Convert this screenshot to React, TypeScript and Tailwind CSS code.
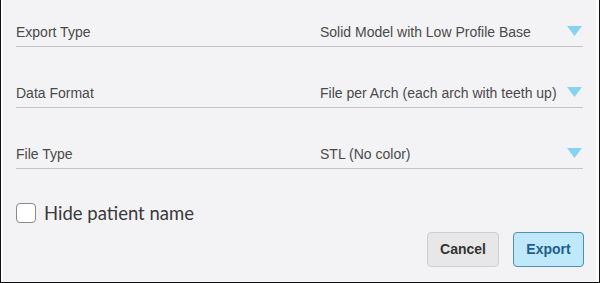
export default function App() {
  const rows = [
    { label: "Export Type", value: "Solid Model with Low Profile Base" },
    { label: "Data Format", value: "File per Arch (each arch with teeth up)" },
    { label: "File Type", value: "STL (No color)" },
  ];

  return (
    <div className="h-[283px] w-[600px] bg-[#f3f3f5] font-['Liberation_Sans',Arial,sans-serif]">
      <div className="flex h-full flex-col border-x border-b border-[#111] shadow-[inset_2px_0_0_#fbfbfc,inset_-3px_0_0_#fbfbfc]">
        <div className="flex flex-col gap-[14px] pl-[15px] pr-[16px]">
          {rows.map((row) => (
            <div
              key={row.label}
              className="flex h-[47px] items-end border-b border-[#c4c4c6] pb-[4px] text-[14px] leading-[20px] text-[#4a4a4a]"
            >
              <span className="w-[304px]">{row.label}</span>
              <span className="flex-1">{row.value}</span>
              <svg width="15" height="10" viewBox="0 0 15 10" className="mb-[6px] mr-[1px]">
                <polygon points="0,0 15,0 7.5,10" fill="#86d2f3" />
              </svg>
            </div>
          ))}
        </div>
        <label className="mt-[34px] flex items-center gap-[8px] pl-[15px]">
          <span className="h-[20px] w-[20px] rounded-[4px] border border-[#8a8a8a] bg-white" />
          <span className="font-['Lato',sans-serif] text-[18.5px] leading-[20px] text-[#3a3a3a]">
            Hide patient name
          </span>
        </label>
        <div className="mt-[9px] flex justify-end gap-[14px] pr-[15px]">
          <button className="h-[35px] w-[72px] rounded-[4px] border border-[#cfcfcf] bg-[#e7e7e8] text-[14px] font-bold text-[#333]">
            Cancel
          </button>
          <button className="h-[35px] w-[71px] rounded-[4px] border border-[#4d8fb5] bg-[#bfe8fb] text-[14px] font-bold text-[#1d5f8e]">
            Export
          </button>
        </div>
      </div>
    </div>
  );
}
